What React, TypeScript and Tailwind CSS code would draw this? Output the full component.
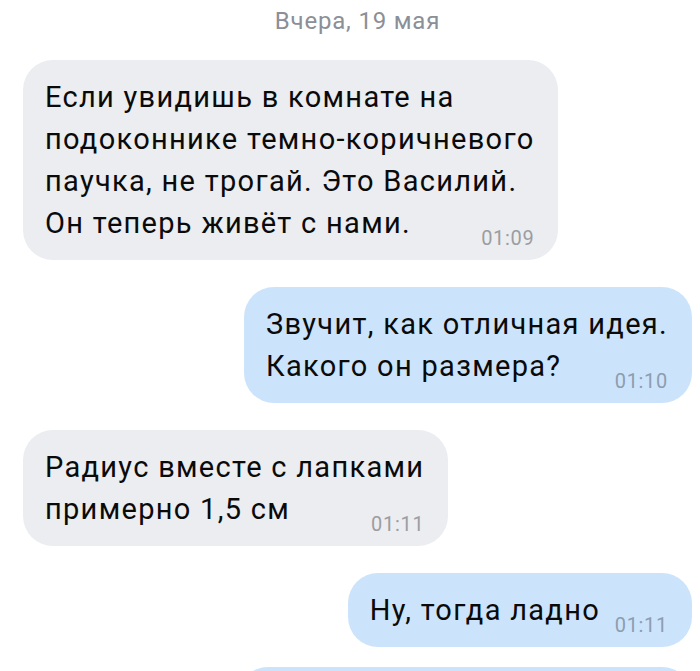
import React from "react";

type Msg = {
  lines: string[];
  time: string;
  out: boolean;
  gap: string;
};

const messages: Msg[] = [
  {
    lines: [
      "Если увидишь в комнате на",
      "подоконнике темно-коричневого",
      "паучка, не трогай. Это Василий.",
      "Он теперь живёт с нами.",
    ],
    time: "01:09",
    out: false,
    gap: "mt-0",
  },
  {
    lines: ["Звучит, как отличная идея.", "Какого он размера?"],
    time: "01:10",
    out: true,
    gap: "mt-[27px]",
  },
  {
    lines: ["Радиус вместе с лапками", "примерно 1,5 см"],
    time: "01:11",
    out: false,
    gap: "mt-[27px]",
  },
  {
    lines: ["Ну, тогда ладно"],
    time: "01:11",
    out: true,
    gap: "mt-[27px]",
  },
];

function Bubble({ m }: { m: Msg }) {
  return (
    <div
      className={`${m.gap} ${
        m.out ? "self-end bg-[#cce4fb]" : "self-start bg-[#ebedf0]"
      } relative rounded-[30px] pl-[22px] pr-[24px] py-[16px] text-[29px] leading-[42px] tracking-[1.3px] text-[#0a0a0a] whitespace-nowrap`}
    >
      {m.lines.map((l, i) => (
        <React.Fragment key={i}>
          {l}
          {i === m.lines.length - 1 ? (
            <span className="inline-block w-[68px]" />
          ) : (
            <br />
          )}
        </React.Fragment>
      ))}
      <span
        className={`absolute right-[24px] bottom-[12px] text-[20px] leading-[20px] tracking-[0.7px] ${
          m.out ? "text-[#8d9db0]" : "text-[#9b9da2]"
        }`}
      >
        {m.time}
      </span>
    </div>
  );
}

export default function App() {
  return (
    <div className="w-[700px] h-[671px] overflow-hidden bg-white font-['Roboto',sans-serif] pl-[23px] pr-[8px]">
      <div className="pt-[7px] text-center text-[24px] leading-[28px] tracking-[0.8px] text-[#8a8f98]">
        Вчера, 19 мая
      </div>
      <div className="mt-[25px] flex flex-col">
        {messages.map((m, i) => (
          <Bubble key={i} m={m} />
        ))}
        <div className="mt-[20px] self-end w-[454px] h-[74px] shrink-0 rounded-[30px] bg-[#cce4fb]" />
      </div>
    </div>
  );
}
